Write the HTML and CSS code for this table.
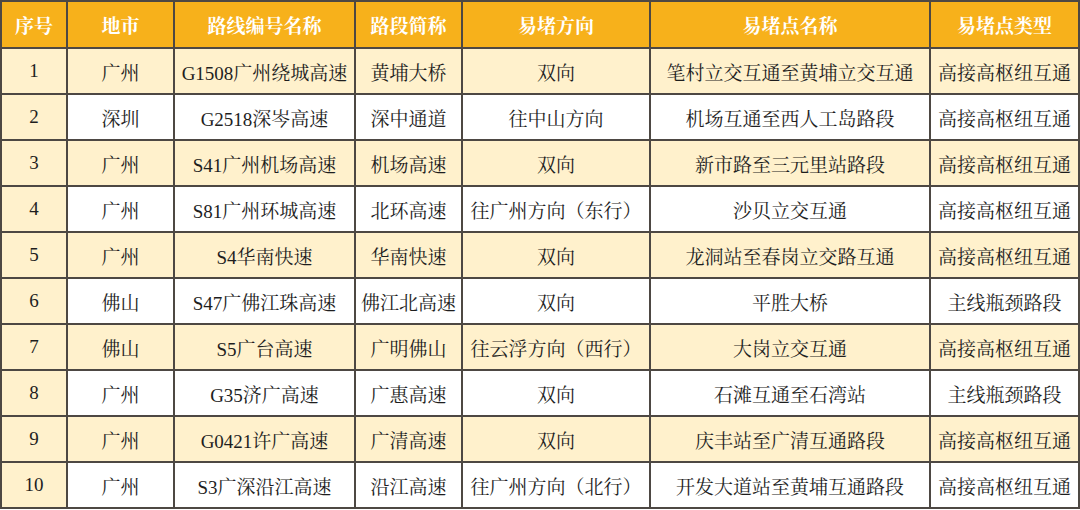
FILE: index.html
```html
<!DOCTYPE html>
<html lang="zh">
<head>
<meta charset="utf-8">
<link rel="stylesheet" href="styles.css">
</head>
<body>
<table class="jam-table">
  <colgroup>
    <col class="c1"><col class="c2"><col class="c3"><col class="c4"><col class="c5"><col class="c6"><col class="c7">
  </colgroup>
  <thead>
    <tr class="head">
      <th>序号</th><th>地市</th><th>路线编号名称</th><th>路段简称</th><th>易堵方向</th><th>易堵点名称</th><th>易堵点类型</th>
    </tr>
  </thead>
  <tbody>
    <tr class="odd"><td class="num">1</td><td>广州</td><td>G1508广州绕城高速</td><td>黄埔大桥</td><td>双向</td><td>笔村立交互通至黄埔立交互通</td><td>高接高枢纽互通</td></tr>
    <tr class="even"><td class="num">2</td><td>深圳</td><td>G2518深岑高速</td><td>深中通道</td><td>往中山方向</td><td>机场互通至西人工岛路段</td><td>高接高枢纽互通</td></tr>
    <tr class="odd"><td class="num">3</td><td>广州</td><td>S41广州机场高速</td><td>机场高速</td><td>双向</td><td>新市路至三元里站路段</td><td>高接高枢纽互通</td></tr>
    <tr class="even"><td class="num">4</td><td>广州</td><td>S81广州环城高速</td><td>北环高速</td><td>往广州方向（东行）</td><td>沙贝立交互通</td><td>高接高枢纽互通</td></tr>
    <tr class="odd"><td class="num">5</td><td>广州</td><td>S4华南快速</td><td>华南快速</td><td>双向</td><td>龙洞站至春岗立交路互通</td><td>高接高枢纽互通</td></tr>
    <tr class="even"><td class="num">6</td><td>佛山</td><td>S47广佛江珠高速</td><td>佛江北高速</td><td>双向</td><td>平胜大桥</td><td>主线瓶颈路段</td></tr>
    <tr class="odd"><td class="num">7</td><td>佛山</td><td>S5广台高速</td><td>广明佛山</td><td>往云浮方向（西行）</td><td>大岗立交互通</td><td>高接高枢纽互通</td></tr>
    <tr class="even"><td class="num">8</td><td>广州</td><td>G35济广高速</td><td>广惠高速</td><td>双向</td><td>石滩互通至石湾站</td><td>主线瓶颈路段</td></tr>
    <tr class="odd"><td class="num">9</td><td>广州</td><td>G0421许广高速</td><td>广清高速</td><td>双向</td><td>庆丰站至广清互通路段</td><td>高接高枢纽互通</td></tr>
    <tr class="even"><td class="num">10</td><td>广州</td><td>S3广深沿江高速</td><td>沿江高速</td><td>往广州方向（北行）</td><td>开发大道站至黄埔互通路段</td><td>高接高枢纽互通</td></tr>
  </tbody>
</table>
</body>
</html>
```
FILE: styles.css
```css
html, body {
  margin: 0;
  padding: 0;
  background: #ffffff;
}
.jam-table {
  border-collapse: collapse;
  table-layout: fixed;
  width: 1078px;
  font-family: "Liberation Serif", "Noto Serif CJK SC", "Noto Sans CJK SC", serif;
  font-size: 19px;
  color: #1e1e1e;
}
.c1 { width: 66px; }
.c2 { width: 107px; }
.c3 { width: 181px; }
.c4 { width: 107px; }
.c5 { width: 188px; }
.c6 { width: 280px; }
.c7 { width: 149px; }
.jam-table th,
.jam-table td {
  border: 2px solid #4d4843;
  text-align: center;
  vertical-align: middle;
  padding: 0;
  white-space: nowrap;
  overflow: hidden;
}
.jam-table th {
  height: 45px;
  background: #f7b11b;
  color: #ffffff;
  font-weight: bold;
}
.jam-table td {
  height: 44px;
}
.odd td { background: #fff1cc; }
.even td { background: #ffffff; }
.jam-table td.num { background: #fff1cc; }
```
